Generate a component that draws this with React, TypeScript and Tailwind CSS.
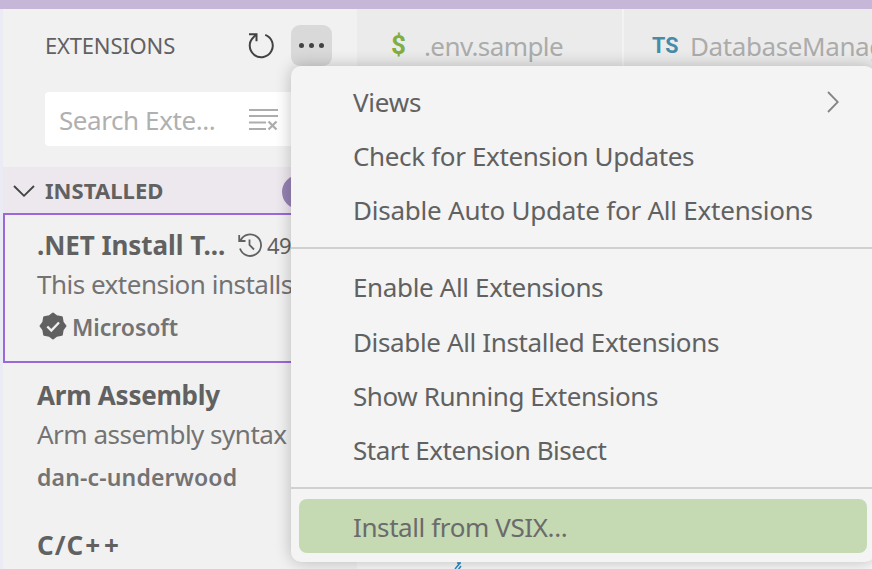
import type { ReactNode } from 'react';

function MenuItem({ children, className = '' }: { children: ReactNode; className?: string }) {
  return (
    <div className={`flex h-[54px] shrink-0 items-center justify-between whitespace-nowrap pl-[62px] pr-[32px] text-[26px] leading-[54px] text-[#616161] ${className}`}>
      {children}
    </div>
  );
}

function Separator() {
  return <div className="my-[10px] h-[2px] shrink-0 bg-[#d0d0d0]" />;
}

function Menu() {
  return (
    <div className="absolute left-[291px] top-[66px] flex h-[496px] w-[584px] flex-col rounded-[10px] bg-[#f4f4f4] pt-[9px] shadow-[0_0_16px_rgba(0,0,0,0.24)]">
      <MenuItem>
        <span className="tracking-[-0.25px]">Views</span>
        <svg className="mr-[4px] h-[22px] w-[12px]" viewBox="0 0 12 22" fill="none" stroke="#858585" strokeWidth="1.8">
          <path d="M1 1l9.800 10L1 21" />
        </svg>
      </MenuItem>
      <MenuItem><span className="tracking-[-0.35px]">Check for Extension Updates</span></MenuItem>
      <MenuItem><span className="tracking-[-0.23px]">Disable Auto Update for All Extensions</span></MenuItem>
      <Separator />
      <MenuItem className="mt-px"><span className="tracking-[-0.36px]">Enable All Extensions</span></MenuItem>
      <MenuItem className="mt-px"><span className="tracking-[-0.36px]">Disable All Installed Extensions</span></MenuItem>
      <MenuItem><span className="tracking-[-0.41px]">Show Running Extensions</span></MenuItem>
      <MenuItem><span className="tracking-[-0.47px]">Start Extension Bisect</span></MenuItem>
      <Separator />
      <MenuItem className="ml-[8px] mr-[8px] rounded-[8px] bg-[#c5d9b2] !pl-[54px] !text-[#6b6b6b]">
        <span className="pt-[2px] tracking-[-0.4px]">Install from VSIX...</span>
      </MenuItem>
    </div>
  );
}

function Sidebar() {
  return (
    <aside className="flex w-[357px] shrink-0 flex-col overflow-hidden border-l-[3px] border-[#ebebf5] bg-[#f1f1f1] text-[#616161]">
      <header className="flex h-[83px] shrink-0 items-start pl-[42px] pt-[16px]">
        <h1 className="w-[203px] whitespace-nowrap text-[22px] leading-[40px] tracking-[-0.18px]">EXTENSIONS</h1>
        <svg className="mt-[7px] h-[27px] w-[27px] shrink-0" viewBox="0 0 27 27" fill="none" stroke="#424242" strokeWidth="2">
          <path d="M17.200 2.900A11.500 11.500 0 1 1 5.500 5.200L8.200 2.500" />
          <path d="M1 2.200h7.500V9.200" />
        </svg>
        <div className="ml-[16px] flex h-[41px] w-[41px] shrink-0 items-center justify-center gap-[5.500px] rounded-[9px] bg-[#d9d9d9]">
          <i className="h-[5px] w-[4.800px] rounded-full bg-[#424242]" />
          <i className="h-[5px] w-[4.800px] rounded-full bg-[#424242]" />
          <i className="h-[5px] w-[4.800px] rounded-full bg-[#424242]" />
        </div>
      </header>
      <div className="ml-[42px] flex h-[54px] shrink-0 items-center rounded-l-[4px] bg-white pl-[14px]">
        <span className="w-[190px] whitespace-nowrap pt-[2px] text-[26px] leading-[54px] tracking-[-0.42px] text-[#b0b0b0]">Search Exte...</span>
        <svg className="h-[24px] w-[30px] shrink-0" viewBox="0 0 30 24" fill="none" stroke="#adadad" strokeWidth="2">
          <path d="M0 3h29M0 9h29M0 15.500h17M0 22h17" />
          <path d="M19.500 14.500l8 8M27.500 14.500l-8 8" strokeWidth="2.300" />
        </svg>
      </div>
      <div className="mt-[21px] flex h-[46px] shrink-0 items-center bg-[#ede7ee]">
        <svg className="ml-[10px] mt-[2px] h-[12px] w-[22px] shrink-0" viewBox="0 0 22 12" fill="none" stroke="#424242" strokeWidth="1.8">
          <path d="M1 1l10 9.800L21 1" />
        </svg>
        <h2 className="ml-[10px] w-[237px] text-[22px] font-bold leading-[46px] tracking-[0.05px]">INSTALLED</h2>
        <div className="mt-[4px] h-[34px] w-[58px] shrink-0 rounded-full bg-[#9583b4]" />
      </div>
      <section className="h-[150px] shrink-0 border-2 border-[#9969d9] pl-[32px] pt-[9px]">
        <div className="flex h-[42px] items-center whitespace-nowrap">
          <b className="w-[201px] text-[26px] leading-[42px] tracking-[-0.06px]">.NET Install T...</b>
          <svg className="h-[24px] w-[24px] shrink-0" viewBox="0 0 24 24" fill="none" stroke="#616161" strokeWidth="1.8">
            <path d="M2.500 7.500A10.800 10.800 0 1 1 2 15.500M1.200 2v6h6.300M11.500 6.500v5.500l4.500 4.500" />
          </svg>
          <span className="ml-[5px] text-[22px] leading-[40px] tracking-[-0.7px]">49</span>
        </div>
        <p className="h-[38px] whitespace-nowrap text-[26px] leading-[36px] tracking-[-0.5px] text-[#737373]">This extension installs</p>
        <div className="mt-px flex h-[44px] items-center">
          <svg className="mb-[3px] ml-[2px] h-[28px] w-[28px]" viewBox="0 0 28 28">
            <path fill="#616161" stroke="#616161" strokeWidth="2" strokeLinejoin="round" d="M14 1.500l3.700 2.800 5.100.900.900 5.100 2.800 3.700-2.800 3.700-.900 5.100-5.100.900-3.700 2.800-3.700-2.800-5.100-.900-.900-5.100L1.500 14l2.800-3.700.900-5.100 5.100-.900z" />
            <path d="M8.300 14.500l4 4 7.700-8" fill="none" stroke="#f1f1f1" strokeWidth="2.300" />
          </svg>
          <span className="ml-[5px] text-[23px] font-semibold leading-[44px] tracking-[-0.05px] text-[#737373]">Microsoft</span>
        </div>
      </section>
      <section className="h-[150px] shrink-0 whitespace-nowrap pl-[34px] pt-[11px]">
        <b className="block h-[42px] text-[26px] leading-[42px] tracking-[-0.23px]">Arm Assembly</b>
        <p className="h-[40px] text-[26px] leading-[36px] tracking-[-0.5px] text-[#737373]">Arm assembly syntax</p>
        <span className="block text-[23px] font-semibold leading-[42px] tracking-[0.16px] text-[#737373]">dan-c-underwood</span>
      </section>
      <section className="shrink-0 pl-[34px] pt-[11px]">
        <b className="text-[26px] leading-[42px] tracking-[1px]">C/C<span className="ml-px tracking-[4px]">++</span></b>
      </section>
    </aside>
  );
}

function Editor() {
  return (
    <main className="min-w-0 flex-1 overflow-hidden bg-[#f7f7f7]">
      <div className="flex h-[70px] whitespace-nowrap bg-[#ebebeb] text-[26px] leading-[74px] text-[#acacac]">
        <div className="flex w-[267px] shrink-0 border-r-2 border-[#f3f3f3] pl-[34px]">
          <span className="w-[33px] font-['Roboto'] text-[26px] font-bold leading-[72px] text-[#7fae42]">$</span>
          <span className="tracking-[-0.6px]">.env.sample</span>
        </div>
        <div className="flex shrink-0 pl-[28px]">
          <span className="w-[38px] font-['Roboto'] text-[21.500px] font-bold leading-[73px] text-[#468ba9]">TS</span>
          <span className="tracking-[-0.4px]">DatabaseManag</span>
        </div>
      </div>
      <svg className="ml-[97px] mt-[482px] h-[10px] w-[10px]" viewBox="0 0 10 10" fill="none" stroke="#2389c8" strokeWidth="1.500">
        <path d="M1 8l5-6M4 9l3-4M3 2h4" />
      </svg>
    </main>
  );
}

export default function App() {
  return (
    <div className="relative flex h-[569px] w-[872px] flex-col overflow-hidden font-['Noto_Sans','Open_Sans',sans-serif]">
      <div className="h-[9px] shrink-0 bg-[#c6b7d8]" />
      <div className="flex h-[560px]">
        <Sidebar />
        <Editor />
      </div>
      <Menu />
    </div>
  );
}
